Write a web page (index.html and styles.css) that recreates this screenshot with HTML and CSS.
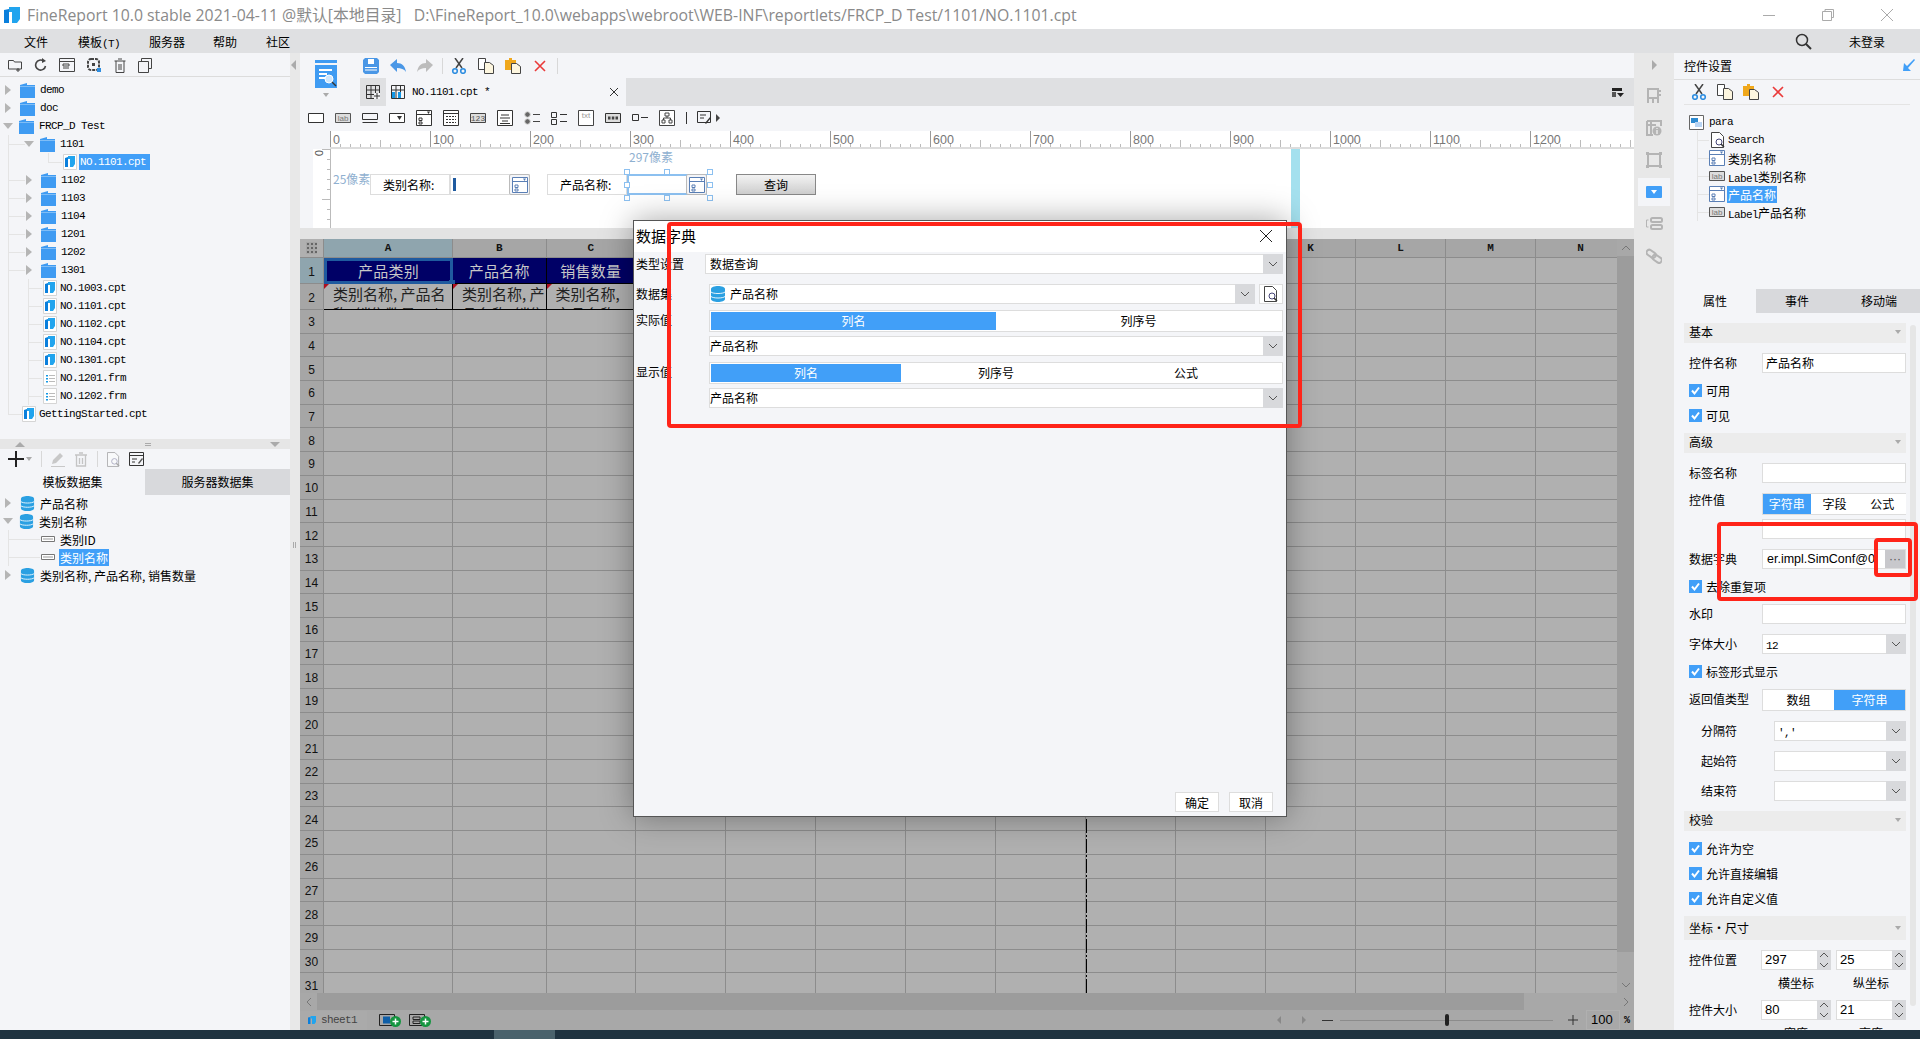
FILE: index.html
```html
<!DOCTYPE html>
<html lang="zh-CN">
<head>
    <meta charset="UTF-8">
    <title>FineReport 10.0</title>
    <link rel="stylesheet" href="styles.css">
</head>
<body>
<svg class="defs" width="0" height="0">
    <symbol id="i-logo" viewBox="0 0 16 16"><path fill="#0a7fdc" d="M0 3l5-1v14H0z"/><path fill="#21a4ee" d="M5 2V0h11v12l-3 4H8V5H5z"/></symbol>
    <symbol id="i-file" viewBox="0 0 14 16"><path fill="#fff" stroke="#d5d5d5" d="M.5.500h13v15H.5z"/><path fill="#0a7fdc" d="M2 4l3-1v10H2z"/><path fill="#21a4ee" d="M5 3V2h7v8l-2 3H7V5H5z"/></symbol>
    <symbol id="i-frm" viewBox="0 0 14 16"><path fill="#fff" stroke="#d5d5d5" d="M.5.500h13v15H.5z"/><path fill="#1398e6" d="M3 5h2v1.500H3zM3 8h2v1.500H3zM3 11h2v1.500H3z"/><path fill="#bbb" d="M6 5h6v1H6zM6 8h6v1H6zM6 11h6v1H6z"/></symbol>
    <symbol id="i-folder" viewBox="0 0 15 15"><path fill="#3f9bf2" d="M0 2l7-2v2h8v13H0z"/><path fill="#7fbdf6" d="M0 3h15v1H0z"/></symbol>
    <symbol id="i-db" viewBox="0 0 14 16"><path fill="#2ba0e2" d="M0 3c0-4 14-4 14 0v10c0 4-14 4-14 0z"/><path fill="none" stroke="#e8f4fc" d="M0 6c2 2 12 2 14 0M0 10.500c2 2 12 2 14 0"/></symbol>
    <symbol id="i-field" viewBox="0 0 14 6"><path fill="#fff" stroke="#777" d="M.5.500h13v5H.5z"/><path fill="#999" d="M2 2.500h10v1H2z"/></symbol>
    <symbol id="i-save" viewBox="0 0 16 16"><path fill="#4a97e6" d="M2 0h12l2 2v12l-2 2H2l-2-2V2z"/><path fill="#fff" d="M5 1h6v5H5zM2 9h12v1H2zM2 11.500h12v1H2z"/></symbol>
    <symbol id="i-undo" viewBox="0 0 16 16"><path fill="currentColor" d="M7 1v4c5 0 8 3 9 9-2-3-5-4-9-4v4L0 7z"/></symbol>
    <symbol id="i-redo" viewBox="0 0 16 16"><path fill="currentColor" d="M9 1v4C4 5 1 8 0 14c2-3 5-4 9-4v4l7-7z"/></symbol>
    <symbol id="i-cut" viewBox="0 0 16 16"><path fill="none" stroke="#444" stroke-width="1.500" d="M4 0l7 10M12 0L5 10"/><circle cx="4" cy="13" r="2.300" fill="none" stroke="#2d8de0" stroke-width="1.600"/><circle cx="12" cy="13" r="2.300" fill="none" stroke="#2d8de0" stroke-width="1.600"/></symbol>
    <symbol id="i-copy" viewBox="0 0 16 16"><path fill="#fff" stroke="#444" d="M.5.500h7v11h-7z"/><path fill="#fdf6df" stroke="#444" d="M6.500 4.500h5l4 3v8h-9z"/></symbol>
    <symbol id="i-paste" viewBox="0 0 16 16"><path fill="#f0a81c" d="M0 2h4V0h3v2h4v10H0z"/><path fill="#fdf6df" stroke="#444" d="M6.500 5.500h5l4 3v7h-9z"/></symbol>
    <symbol id="i-del" viewBox="0 0 12 12"><path fill="none" stroke="#ea3a3a" stroke-width="1.600" d="M1 1l10 10M11 1L1 11"/></symbol>
    <symbol id="i-combo" viewBox="0 0 16 16"><path fill="#fff" stroke="#5a7fb5" d="M.5.500h15v15H.5z"/><path fill="none" stroke="#5a7fb5" d="M.5 4.500h15M3 8h3v2.500H3zM3 12h3v2H3z"/><path fill="#5a7fb5" d="M11 1.500h3L12.500 4z"/></symbol>
    <symbol id="i-lab" viewBox="0 0 16 10"><path fill="#ddd" stroke="#555" d="M.5.500h15v9H.5z"/><text x="8" y="8" font-family="Liberation Sans" font-size="8" fill="#777" text-anchor="middle">lab</text></symbol>
    <symbol id="i-preview" viewBox="0 0 14 16"><path fill="#fff" stroke="#444" d="M.5.500h8l4 4v11H.5z"/><circle cx="8" cy="10" r="3" fill="#fff" stroke="#447"/><path stroke="#333" stroke-width="1.500" d="M10 12l3 3"/></symbol>
    <symbol id="i-chk" viewBox="0 0 13 13"><path fill="#419ff8" d="M0 0h13v13H0z"/><path fill="none" stroke="#fff" stroke-width="2" d="M3 6.500l2.500 3L10 3.500"/></symbol>
    <symbol id="i-plus" viewBox="0 0 11 11"><circle cx="5.500" cy="5.500" r="5.500" fill="#14953f"/><path stroke="#fff" stroke-width="1.500" d="M2.500 5.500h6M5.500 2.500v6"/></symbol>
</svg>

<div class="app">
    <div class="titlebar">
        <svg class="logo"><use href="#i-logo"/></svg>
        <span class="title-text">FineReport 10.0 stable 2021-04-11 @默认[本地目录]&nbsp;&nbsp;&nbsp;D:\FineReport_10.0\webapps\webroot\WEB-INF\reportlets/FRCP_D Test/1101/NO.1101.cpt</span>
        <div class="winctl">
            <svg width="14" height="14"><path stroke="#aaa" d="M1 7.500h12"/></svg>
            <svg width="14" height="14"><path fill="none" stroke="#aaa" d="M1.500 3.500h9v9h-9zM4 3V1.500h8.500v8H11"/></svg>
            <svg width="14" height="14"><path stroke="#aaa" d="M1 1l12 12M13 1L1 13"/></svg>
        </div>
    </div>

    <div class="menubar">
        <span class="menu-item m1">文件</span>
        <span class="menu-item m2">模板<span class="m">(T)</span></span>
        <span class="menu-item m3">服务器</span>
        <span class="menu-item m4">帮助</span>
        <span class="menu-item m5">社区</span>
        <svg class="search" width="17" height="17"><circle cx="7" cy="7" r="5.500" fill="none" stroke="#333" stroke-width="1.500"/><path stroke="#333" stroke-width="2" d="M11 11l5 5"/></svg>
        <span class="login">未登录</span>
    </div>

    <div class="main">
        <div class="left">
            <div class="left-tools">
                <svg width="14" height="14"><path fill="none" stroke="#444" d="M.5 2.500h5l1 1.500h7v7h-13zM10 10v4M8 12h4"/></svg>
                <svg width="13" height="14"><path fill="none" stroke="#444" stroke-width="1.600" d="M11.500 8a5 5 0 1 1-2-5"/><path fill="#444" d="M8 0l4 3-4 2z"/></svg>
                <svg width="16" height="14"><path fill="none" stroke="#444" d="M.5.500h15v13H.5zM.5 3.500h15M4 6h6v2H4zM4 10h6"/></svg>
                <svg width="15" height="15"><rect x="1" y="1" width="11" height="11" rx="3" fill="none" stroke="#444" stroke-width="2" stroke-dasharray="3 1"/><path fill="#444" d="M5 5h3v3H5z"/><path fill="#2d8de0" d="M10 10h4v4h-4z"/></svg>
                <svg width="12" height="15"><path fill="none" stroke="#444" d="M.5 3h11M2 3v11.500h8V3M4 1h4M5 6v6M7 6v6"/></svg>
                <svg width="14" height="15"><path fill="none" stroke="#444" d="M3.500 3V.5h10v10H11M.5 3.500h10v11H.5z"/></svg>
            </div>
            <div class="tree file-tree">
                <div class="row lv0"><i class="tw"></i><svg class="ic"><use href="#i-folder"/></svg><span class="m">demo</span></div>
                <div class="row lv0"><i class="tw"></i><svg class="ic"><use href="#i-folder"/></svg><span class="m">doc</span></div>
                <div class="row lv0"><i class="tw open"></i><svg class="ic"><use href="#i-folder"/></svg><span class="m">FRCP_D Test</span></div>
                <div class="row lv1"><i class="tw open"></i><svg class="ic"><use href="#i-folder"/></svg><span class="m">1101</span></div>
                <div class="row lv2"><svg class="ic ic-file"><use href="#i-file"/></svg><span class="m sel">NO.1101.cpt</span></div>
                <div class="row lv1"><i class="tw"></i><svg class="ic"><use href="#i-folder"/></svg><span class="m">1102</span></div>
                <div class="row lv1"><i class="tw"></i><svg class="ic"><use href="#i-folder"/></svg><span class="m">1103</span></div>
                <div class="row lv1"><i class="tw"></i><svg class="ic"><use href="#i-folder"/></svg><span class="m">1104</span></div>
                <div class="row lv1"><i class="tw"></i><svg class="ic"><use href="#i-folder"/></svg><span class="m">1201</span></div>
                <div class="row lv1"><i class="tw"></i><svg class="ic"><use href="#i-folder"/></svg><span class="m">1202</span></div>
                <div class="row lv1"><i class="tw"></i><svg class="ic"><use href="#i-folder"/></svg><span class="m">1301</span></div>
                <div class="row flv1"><svg class="ic ic-file"><use href="#i-file"/></svg><span class="m">NO.1003.cpt</span></div>
                <div class="row flv1"><svg class="ic ic-file"><use href="#i-file"/></svg><span class="m">NO.1101.cpt</span></div>
                <div class="row flv1"><svg class="ic ic-file"><use href="#i-file"/></svg><span class="m">NO.1102.cpt</span></div>
                <div class="row flv1"><svg class="ic ic-file"><use href="#i-file"/></svg><span class="m">NO.1104.cpt</span></div>
                <div class="row flv1"><svg class="ic ic-file"><use href="#i-file"/></svg><span class="m">NO.1301.cpt</span></div>
                <div class="row flv1"><svg class="ic ic-file"><use href="#i-frm"/></svg><span class="m">NO.1201.frm</span></div>
                <div class="row flv1"><svg class="ic ic-file"><use href="#i-frm"/></svg><span class="m">NO.1202.frm</span></div>
                <div class="row flv0"><svg class="ic ic-file"><use href="#i-file"/></svg><span class="m">GettingStarted.cpt</span></div>
            </div>
            <div class="splitter">
                <i class="tri-up"></i><span class="grip"></span><i class="tri-down"></i>
            </div>
            <div class="data-tools">
                <svg width="16" height="16"><path stroke="#222" stroke-width="2" d="M0 8h16M8 0v16"/></svg>
                <i class="caret"></i>
                <span class="vsep"></span>
                <svg width="14" height="15"><path fill="#c8c8c8" d="M9 1l3 3-7 7-4 1 1-4zM0 14h14v1H0z"/></svg>
                <svg width="14" height="15"><path fill="none" stroke="#c4c4c4" stroke-width="1.300" d="M1 3h12M2.500 3v11h9V3M5 1h4M5.500 6v6M8.500 6v6"/></svg>
                <span class="vsep"></span>
                <svg width="13" height="15" class="dim"><use href="#i-preview"/></svg>
                <svg width="15" height="14"><path fill="none" stroke="#333" d="M.5.500h14v13H.5zM.5 3.500h14M3 7h5M3 10h3"/><path fill="#555" d="M9 11l4-5 1 1-4 5z"/></svg>
            </div>
            <div class="data-tabs">
                <span>模板数据集</span><span class="off">服务器数据集</span>
            </div>
            <div class="tree data-tree">
                <div class="row lv0"><i class="tw"></i><svg class="ic"><use href="#i-db"/></svg>产品名称</div>
                <div class="row lv0"><i class="tw open"></i><svg class="ic"><use href="#i-db"/></svg>类别名称</div>
                <div class="row fld"><svg class="ic-fld"><use href="#i-field"/></svg>类别ID</div>
                <div class="row fld"><svg class="ic-fld"><use href="#i-field"/></svg><span class="sel">类别名称</span></div>
                <div class="row lv0"><i class="tw"></i><svg class="ic"><use href="#i-db"/></svg>类别名称, 产品名称, 销售数量</div>
            </div>
        </div>

        <div class="gutter">
            <i class="tri-left"></i>
            <span class="bars"></span>
        </div>

        <div class="center">
            <div class="head">
                <div class="big-icon">
                    <svg width="22" height="28"><path fill="#3f9bf2" d="M0 0h22v3H0zM0 5h22v23H0z"/><path fill="#fff" d="M4 9h13v2H4zM4 13h8v2H4zM4 17h6v2H4z"/><circle cx="14" cy="19" r="4" fill="#cfe6fb" stroke="#fff"/><path stroke="#333" stroke-width="1.500" d="M17 22l4 4"/></svg>
                    <i class="caret"></i>
                </div>
                <div class="head-right">
                    <div class="tools">
                        <svg width="16" height="16"><use href="#i-save"/></svg>
                        <svg width="16" height="16" class="blue"><use href="#i-undo"/></svg>
                        <svg width="16" height="16" class="grey"><use href="#i-redo"/></svg>
                        <span class="vsep"></span>
                        <svg width="16" height="16"><use href="#i-cut"/></svg>
                        <svg width="16" height="16"><use href="#i-copy"/></svg>
                        <svg width="16" height="16"><use href="#i-paste"/></svg>
                        <svg class="tool-del" width="12" height="12"><use href="#i-del"/></svg>
                        <span class="vsep"></span>
                    </div>
                    <div class="tabs">
                        <div class="tab-add"><svg width="14" height="14"><path fill="none" stroke="#333" d="M.5.500h13v13H.5zM.5 5h13M.5 9.500h13M5 .5v13M9.500.5v9"/><path fill="#f4f5f8" d="M8 8h6v6H8z"/><path stroke="#333" d="M8 11h6M11 8v6"/></svg></div>
                        <div class="tab">
                            <svg width="14" height="14"><path fill="none" stroke="#333" d="M.5.500h13v13H.5zM.5 5h13M5 .5v13M9.500.5v13"/><path fill="#1398e6" d="M1 7h3v6H1zM7 7h3v6H7z"/></svg>
                            <span class="m">NO.1101.cpt *</span>
                            <svg class="tab-x" width="10" height="10"><path stroke="#333" d="M1 1l8 8M9 1L1 9"/></svg>
                        </div>
                        <svg class="tab-menu" width="12" height="10"><path fill="#222" d="M0 0h10v3H0z"/><path fill="#222" d="M5 5h7l-3.500 4z"/><path fill="#555" d="M0 4h4v5H0z"/></svg>
                    </div>
                </div>
            </div>

            <div class="widgets">
                <svg width="16" height="10"><path fill="#fff" stroke="#333" d="M.5.500h15v9H.5z"/></svg>
                <svg width="16" height="10"><use href="#i-lab"/></svg>
                <svg width="16" height="10"><path fill="none" stroke="#333" d="M.5.500h15v6H.5zM.5 9.500h15"/></svg>
                <svg width="16" height="10"><path fill="#fff" stroke="#333" d="M.5.500h15v9H.5z"/><path fill="#333" d="M8 3h5l-2.500 4z"/></svg>
                <svg width="16" height="16"><path fill="#fff" stroke="#333" d="M.5.500h15v15H.5z"/><path fill="none" stroke="#333" d="M.5 4.500h15M3 8h3v2.500H3zM3 12h3v2H3z"/><path fill="#333" d="M11 1.500h3L12.500 4z"/></svg>
                <svg width="16" height="16"><path fill="#fff" stroke="#333" d="M.5.500h15v15H.5zM.5 3.500h15"/><path stroke="#333" stroke-dasharray="2 1" d="M3 6.500h10M3 9.500h10M3 12.500h10"/></svg>
                <svg width="16" height="10"><path fill="#ddd" stroke="#444" d="M.5.500h15v9H.5z"/><text x="8" y="8" font-family="Liberation Mono" font-size="8" fill="#555" text-anchor="middle">123</text></svg>
                <svg width="16" height="16"><path fill="#fff" stroke="#333" d="M.5.500h15v15H.5zM4 5h8M3 8h10M5 11h6M3 13.500h10"/></svg>
                <svg width="16" height="14"><circle cx="3.500" cy="3.500" r="2.800" fill="#666" stroke="#ddd"/><circle cx="3.500" cy="10.500" r="2.800" fill="#666" stroke="#ddd"/><path stroke="#444" d="M9 3.500h7M9 10.500h7"/></svg>
                <svg width="16" height="14"><path fill="none" stroke="#333" d="M.5 1.500h5v5h-5zM.5 8.500h5v5h-5zM9 3.500h7M9 10.500h7"/></svg>
                <svg width="16" height="16"><path fill="#fff" stroke="#444" d="M.5.500h15v15H.5z"/><text x="8" y="8" font-family="Liberation Sans" font-size="8" fill="#999" text-anchor="middle">txt</text></svg>
                <svg width="16" height="10"><path fill="#ddd" stroke="#333" d="M.5.500h15v9H.5z"/><path fill="#444" d="M3 3.500h2.500v3H3zM6.800 3.500h2.500v3H6.800zM10.500 3.500H13v3h-2.500z"/></svg>
                <svg width="16" height="8"><path fill="none" stroke="#333" d="M.5.500h6v6h-6zM9 3.500h7"/></svg>
                <svg width="16" height="16"><path fill="#fff" stroke="#444" d="M.5.500h15v15H.5zM6 3h4v3H6zM3 10h3v3H3zM10 10h3v3h-3zM8 6v2M4.500 10V8h7v2"/></svg>
                <span class="vsep tall"></span>
                <svg width="14" height="14"><path fill="none" stroke="#333" d="M.5.500h13v11H.5zM3 4h6M3 7h4"/><path fill="#333" d="M8 12l5-6 1 1-5 6z"/></svg>
                <i class="tri-right"></i>
            </div>

            <div class="ruler-row">
                <div class="ruler-gap"></div>
                <div class="ruler">
                    <span>0</span><span>100</span><span>200</span><span>300</span><span>400</span><span>500</span><span>600</span><span>700</span><span>800</span><span>900</span><span>1000</span><span>1100</span><span>1200</span>
                </div>
            </div>

            <div class="form-row">
                <div class="ruler-v"><span>0</span></div>
                <div class="canvas">
                    <span class="px-tip tip-left">25像素</span>
                    <span class="px-tip tip-top">297像素</span>
                    <div class="f-label lab1">类别名称:</div>
                    <div class="f-combo combo1"><i class="cursor"></i><span class="f-btn"><svg width="16" height="16"><use href="#i-combo"/></svg></span></div>
                    <div class="f-label lab2">产品名称:</div>
                    <div class="f-combo combo2 picked"><span class="f-btn"><svg width="16" height="16"><use href="#i-combo"/></svg></span></div>
                    <i class="hd h1"></i><i class="hd h2"></i><i class="hd h3"></i><i class="hd h4"></i><i class="hd h5"></i><i class="hd h6"></i><i class="hd h7"></i><i class="hd h8"></i>
                    <div class="f-query">查询</div>
                    <div class="canvas-edge"></div>
                </div>
            </div>
            <div class="strip"></div>

            <div class="sheet-area">
                <div class="sheet-clip">
                    <div class="sheet" id="sheetGrid"></div>
                    <div class="page-break"></div>
                </div>
                <div class="vbar">
                    <span class="sb-btn"><svg width="10" height="6"><path fill="none" stroke="#777" d="M1 5l4-4 4 4"/></svg></span>
                    <span class="sb-thumb"></span>
                    <span class="sb-btn sb-end"><svg width="10" height="6"><path fill="none" stroke="#777" d="M1 1l4 4 4-4"/></svg></span>
                </div>
            </div>

            <div class="hbar">
                <span class="hb-btn"><svg width="6" height="10"><path fill="none" stroke="#777" d="M5 1L1 5l4 4"/></svg></span>
                <span class="hb-thumb"></span>
                <span class="hb-btn end"><svg width="6" height="10"><path fill="none" stroke="#777" d="M1 1l4 4-4 4"/></svg></span>
            </div>

            <div class="sheetbar">
                <div class="sheet-tab"><svg width="8" height="8"><use href="#i-logo"/></svg><span class="m">sheet1</span></div>
                <svg class="add-a" width="22" height="14"><path fill="none" stroke="#222" d="M.5 1.500h15v11H.5z"/><path fill="#0f5fa8" d="M4 3.500h7v7H4z"/><use href="#i-plus" x="11" y="3" width="11" height="11"/></svg>
                <svg class="add-b" width="22" height="14"><path fill="none" stroke="#222" d="M.5 1.500h15v11H.5zM4 4h7v2.500H4zM4 8h7v2.500H4z"/><use href="#i-plus" x="11" y="3" width="11" height="11"/></svg>
                <div class="zoombox">
                    <i class="arr-l"></i><i class="arr-r"></i>
                    <span class="z-minus"></span>
                    <span class="z-track"><i></i></span>
                    <svg width="10" height="10"><path stroke="#333" d="M0 5h10M5 0v10"/></svg>
                    <span class="z-val">100</span>
                    <span class="z-pct">%</span>
                </div>
            </div>
        </div>

        <div class="iconbar">
            <i class="tri-right side"></i>
            <svg class="rail" width="16" height="16"><path fill="none" stroke="#b4b4b4" stroke-width="2" d="M2 1h10v9H2zM2 10v5M7 10v5M12 10v5M12 3h3M12 7h3"/></svg>
            <svg class="rail" width="16" height="16"><path fill="none" stroke="#b4b4b4" stroke-width="2" d="M1 1h14v5M1 1v14h6M1 5h9M5 1v14"/><circle cx="11" cy="11" r="4.500" fill="#b4b4b4"/><path stroke="#e8e8e8" stroke-width="1.500" d="M11 10v4M11 8v1"/></svg>
            <svg class="rail" width="16" height="16"><path fill="none" stroke="#b4b4b4" stroke-width="2" d="M2 2h12v12H2z"/><path fill="#b4b4b4" d="M0 0h3v3H0zM13 0h3v3h-3zM0 13h3v3H0zM13 13h3v3h-3z"/></svg>
            <div class="rail-on"><svg width="16" height="12"><rect width="16" height="12" rx="1" fill="#419ff8"/><path fill="#fff" d="M5 4h6L8 8z"/></svg></div>
            <svg class="rail" width="17" height="13"><path fill="none" stroke="#b4b4b4" d="M2.500 3H.5v7h2"/><rect x="5" y="1" width="11" height="4" rx="1.500" fill="none" stroke="#b4b4b4" stroke-width="2"/><rect x="5" y="8" width="11" height="4" rx="1.500" fill="none" stroke="#b4b4b4" stroke-width="2"/></svg>
            <svg class="rail rail-end" width="16" height="16"><rect x="0" y="3" width="10" height="5.500" rx="2.700" fill="none" stroke="#b4b4b4" stroke-width="2" transform="rotate(35 5 6)"/><rect x="6" y="8" width="10" height="5.500" rx="2.700" fill="none" stroke="#b4b4b4" stroke-width="2" transform="rotate(35 11 11)"/></svg>
        </div>

        <div class="right">
            <div class="right-head">控件设置<svg width="12" height="12"><path fill="#419ff8" d="M12 1l-1-1-7 7-3-3-1 8h8L5 9z"/></svg></div>
            <div class="right-tools">
                <svg width="16" height="16"><use href="#i-cut"/></svg>
                <svg width="16" height="16"><use href="#i-copy"/></svg>
                <svg width="16" height="16"><use href="#i-paste"/></svg>
                <svg width="12" height="12"><use href="#i-del"/></svg>
            </div>
            <div class="tree widget-tree">
                <div class="row w-root"><svg width="15" height="15"><path fill="#fff" stroke="#666" d="M.5.500h14v14H.5z"/><path fill="#2d8ad0" d="M2 3h7v5H2z"/><path fill="#b9d5f4" d="M6 7h7v5H6z"/></svg><span class="m">para</span></div>
                <div class="row w-kid"><svg class="kid-search" width="14" height="16"><use href="#i-preview"/></svg><span class="m">Search</span></div>
                <div class="row w-kid"><svg width="16" height="16"><use href="#i-combo"/></svg><span>类别名称</span></div>
                <div class="row w-kid"><svg width="16" height="10"><use href="#i-lab"/></svg><span><span class="m">Label</span>类别名称</span></div>
                <div class="row w-kid"><svg width="16" height="16"><use href="#i-combo"/></svg><span class="sel">产品名称</span></div>
                <div class="row w-kid"><svg width="16" height="10"><use href="#i-lab"/></svg><span><span class="m">Label</span>产品名称</span></div>
            </div>
            <div class="prop-tabs">
                <span class="on">属性</span><span>事件</span><span>移动端</span>
            </div>
            <div class="prop-scroll"></div>
            <div class="props">
                <div class="sect">基本<i class="caret"></i></div>
                <div class="prow"><label>控件名称</label><div class="inp">产品名称</div></div>
                <div class="chk"><svg width="13" height="13"><use href="#i-chk"/></svg>可用</div>
                <div class="chk"><svg width="13" height="13"><use href="#i-chk"/></svg>可见</div>
                <div class="sect">高级<i class="caret"></i></div>
                <div class="prow"><label>标签名称</label><div class="inp"></div></div>
                <div class="prow seg-row"><label class="top">控件值</label><div class="seg s3"><b>字符串</b><span>字段</span><span>公式</span></div></div>
                <div class="prow tight"><label></label><div class="inp"></div></div>
                <div class="prow"><label>数据字典</label><div class="inp dict">er.impl.SimConf@0|<span class="dots">···</span></div></div>
                <div class="chk"><svg width="13" height="13"><use href="#i-chk"/></svg>去除重复项</div>
                <div class="prow"><label>水印</label><div class="inp"></div></div>
                <div class="prow"><label>字体大小</label><div class="inp sel-box"><span class="m">12</span><span class="drop"><svg width="10" height="6"><path fill="none" stroke="#555" d="M1 1l4 4 4-4"/></svg></span></div></div>
                <div class="chk"><svg width="13" height="13"><use href="#i-chk"/></svg>标签形式显示</div>
                <div class="prow seg-row"><label>返回值类型</label><div class="seg s2"><span>数组</span><b>字符串</b></div></div>
                <div class="prow sub"><label>分隔符</label><div class="inp sel-box"><span class="m">','</span><span class="drop"><svg width="10" height="6"><path fill="none" stroke="#555" d="M1 1l4 4 4-4"/></svg></span></div></div>
                <div class="prow sub"><label>起始符</label><div class="inp sel-box"><span class="drop"><svg width="10" height="6"><path fill="none" stroke="#555" d="M1 1l4 4 4-4"/></svg></span></div></div>
                <div class="prow sub"><label>结束符</label><div class="inp sel-box"><span class="drop"><svg width="10" height="6"><path fill="none" stroke="#555" d="M1 1l4 4 4-4"/></svg></span></div></div>
                <div class="sect">校验<i class="caret"></i></div>
                <div class="chk"><svg width="13" height="13"><use href="#i-chk"/></svg>允许为空</div>
                <div class="chk"><svg width="13" height="13"><use href="#i-chk"/></svg>允许直接编辑</div>
                <div class="chk"><svg width="13" height="13"><use href="#i-chk"/></svg>允许自定义值</div>
                <div class="sect tall">坐标・尺寸<i class="caret"></i></div>
                <div class="prow spin-row"><label>控件位置</label>
                    <div class="spin">297<span class="arrows"><svg width="10" height="18"><path fill="none" stroke="#555" d="M1 6l4-4 4 4M1 12l4 4 4-4"/></svg></span></div>
                    <div class="spin">25<span class="arrows"><svg width="10" height="18"><path fill="none" stroke="#555" d="M1 6l4-4 4 4M1 12l4 4 4-4"/></svg></span></div>
                </div>
                <div class="caps"><span>横坐标</span><span>纵坐标</span></div>
                <div class="prow spin-row"><label>控件大小</label>
                    <div class="spin">80<span class="arrows"><svg width="10" height="18"><path fill="none" stroke="#555" d="M1 6l4-4 4 4M1 12l4 4 4-4"/></svg></span></div>
                    <div class="spin">21<span class="arrows"><svg width="10" height="18"><path fill="none" stroke="#555" d="M1 6l4-4 4 4M1 12l4 4 4-4"/></svg></span></div>
                </div>
                <div class="caps"><span>宽度</span><span>高度</span></div>
            </div>
        </div>
    </div>

    <div class="taskbar"><span class="task-on"></span></div>

    <div class="dialog">
        <div class="dlg-title">数据字典<svg width="14" height="14"><path stroke="#222" d="M1 1l12 12M13 1L1 13"/></svg></div>
        <div class="dlg-body">
            <div class="drow first"><label>类型设置</label><div class="dsel">数据查询<span class="drop"><svg width="10" height="6"><path fill="none" stroke="#555" d="M1 1l4 4 4-4"/></svg></span></div></div>
            <div class="drow r2"><label>数据集</label>
                <div class="dsel with-db"><svg class="db" width="14" height="16"><use href="#i-db"/></svg>产品名称<span class="drop"><svg width="10" height="6"><path fill="none" stroke="#555" d="M1 1l4 4 4-4"/></svg></span></div>
                <div class="dpreview"><svg width="14" height="16"><use href="#i-preview"/></svg></div>
            </div>
            <div class="drow r3"><label>实际值</label><div class="dseg"><b>列名</b><span>列序号</span></div></div>
            <div class="drow r4"><label></label><div class="dsel bare">产品名称<span class="drop"><svg width="10" height="6"><path fill="none" stroke="#555" d="M1 1l4 4 4-4"/></svg></span></div></div>
            <div class="drow r3"><label>显示值</label><div class="dseg three"><b>列名</b><span>列序号</span><span>公式</span></div></div>
            <div class="drow r4"><label></label><div class="dsel bare">产品名称<span class="drop"><svg width="10" height="6"><path fill="none" stroke="#555" d="M1 1l4 4 4-4"/></svg></span></div></div>
        </div>
        <div class="dlg-foot"><button>确定</button><button>取消</button></div>
    </div>

    <div class="mark mark-dialog"></div>
    <div class="mark mark-dict"></div>
    <div class="mark mark-dots"></div>
</div>
<script src="grid.js"></script>
</body>
</html>
```

FILE: styles.css
```css
* {
    box-sizing: border-box;
}
body {
    margin: 0;
    background-color: #f4f5f8;
    color: #000;
    font-family: "Noto Sans CJK SC", "Liberation Sans", sans-serif;
    font-size: 12px;
}
i {
    display: block;
    font-style: normal;
}
svg {
    display: block;
    flex: none;
}
.defs {
    display: none;
}
.m {
    font-family: "Liberation Mono", "Noto Sans CJK SC", monospace;
    font-size: 11px;
    letter-spacing: -0.6px;
}
.sel {
    background-color: #419ff8;
    color: #fff;
}
.app {
    position: relative;
    display: flex;
    flex-direction: column;
    width: 1920px;
    height: 1039px;
    overflow: hidden;
}

/* title + menu */
.titlebar {
    display: flex;
    align-items: center;
    height: 29px;
    padding-left: 4px;
    background-color: #fff;
}
.logo {
    width: 16px;
    height: 16px;
}
.title-text {
    margin-left: 7px;
    color: #8a8a8a;
    font-family: "Open Sans", "Noto Sans CJK SC", sans-serif;
    font-size: 15.8px;
}
.winctl {
    display: flex;
    gap: 45px;
    margin-left: auto;
    padding-right: 26px;
}
.menubar {
    display: flex;
    align-items: center;
    height: 24px;
    background-color: #dfe0e2;
}
.menu-item {
    flex: none;
}
.m1 { margin-left: 24px; }
.m2 { margin-left: 30px; }
.m3 { margin-left: 29px; }
.m4 { margin-left: 28px; }
.m5 { margin-left: 29px; }
.search {
    margin-left: auto;
}
.login {
    margin: 0 35px 0 37px;
}
.main {
    display: flex;
    height: 977px;
}
.taskbar {
    height: 9px;
    padding-left: 494px;
    background-color: #1f3340;
}
.task-on {
    display: block;
    width: 61px;
    height: 9px;
    background-color: #4a626c;
}

/* left pane */
.left {
    width: 290px;
    background-color: #f4f5f8;
}
.left-tools {
    display: flex;
    align-items: center;
    gap: 12px;
    height: 24px;
    padding: 1px 0 0 8px;
    border-bottom: 1px solid #dcdcdc;
}
.file-tree {
    height: 362px;
    padding-top: 4px;
}
.data-tree {
    margin-top: -1px;
}
.row {
    --guide: linear-gradient(#e4e4e4, #e4e4e4);
    display: flex;
    align-items: center;
    height: 18px;
    white-space: nowrap;
}
.tw {
    width: 0;
    height: 0;
    margin-right: 9px;
    border-top: 5px solid transparent;
    border-bottom: 5px solid transparent;
    border-left: 6px solid #b5b5b5;
}
.tw.open {
    margin-right: 6px;
    margin-left: -2px;
    border-top: 6px solid #b5b5b5;
    border-right: 5px solid transparent;
    border-bottom: 0;
    border-left: 5px solid transparent;
}
.ic {
    width: 15px;
    height: 15px;
    margin-right: 5px;
}
.ic-file {
    width: 14px;
    height: 16px;
    margin-right: 3px;
}
.lv0 { padding-left: 5px; }
.lv1 {
    padding-left: 26px;
    background: var(--guide) 8px 0 / 1px 100% no-repeat, var(--guide) 8px 9px / 17px 1px no-repeat;
}
.lv2 {
    padding-left: 63px;
    background: var(--guide) 8px 0 / 1px 100% no-repeat, var(--guide) 48px 0 / 1px 10px no-repeat, var(--guide) 48px 9px / 14px 1px no-repeat;
}
.lv2 .ic-file { margin-right: 2px; }
.lv2 .sel {
    padding: 2px 4px 2px 1px;
}
.flv1 {
    padding-left: 43px;
    background: var(--guide) 8px 0 / 1px 100% no-repeat, var(--guide) 28px 0 / 1px 100% no-repeat, var(--guide) 28px 9px / 14px 1px no-repeat;
}
.flv0 {
    padding-left: 22px;
    background: var(--guide) 8px 0 / 1px 10px no-repeat, var(--guide) 8px 9px / 14px 1px no-repeat;
}
.fld {
    padding-left: 41px;
    background: var(--guide) 8px 0 / 1px 100% no-repeat, var(--guide) 8px 9px / 32px 1px no-repeat;
}
.ic-fld {
    width: 14px;
    height: 6px;
    margin-right: 5px;
}
.fld .sel {
    margin-left: -1px;
    padding: 0 1px;
}
.splitter {
    display: flex;
    align-items: center;
    justify-content: space-between;
    height: 10px;
    padding: 0 10px 0 15px;
    background-color: #e6e6e6;
}
.grip {
    width: 6px;
    height: 3px;
    border-top: 1px solid #aaa;
    border-bottom: 1px solid #aaa;
}
.tri-up {
    border-right: 5px solid transparent;
    border-bottom: 5px solid #aaa;
    border-left: 5px solid transparent;
}
.tri-down {
    border-top: 5px solid #aaa;
    border-right: 5px solid transparent;
    border-left: 5px solid transparent;
}
.data-tools {
    display: flex;
    align-items: center;
    gap: 9px;
    height: 20px;
    padding-left: 8px;
}
.data-tools .caret {
    margin-left: -7px;
}
.dim {
    opacity: 0.4;
}
.caret {
    border-top: 4px solid #aaa;
    border-right: 3.500px solid transparent;
    border-left: 3.500px solid transparent;
}
.vsep {
    width: 1px;
    height: 16px;
    background-color: #d8d8d8;
}
.data-tabs {
    display: flex;
    height: 26px;
}
.data-tabs span {
    flex: 1;
    font-size: 12px;
    line-height: 26px;
    text-align: center;
}
.data-tabs .off {
    background-color: #d8d9dc;
}
.gutter {
    position: relative;
    width: 10px;
    background-color: #e8e8e8;
}
.tri-left {
    position: absolute;
    top: 7px;
    left: 1px;
    border-top: 5px solid transparent;
    border-right: 5px solid #aaa;
    border-bottom: 5px solid transparent;
}
.bars {
    position: absolute;
    top: 489px;
    left: 3px;
    width: 3px;
    height: 6px;
    border-right: 1px solid #aaa;
    border-left: 1px solid #aaa;
}

/* center */
.center {
    display: flex;
    flex-direction: column;
    width: 1334px;
    background-color: #f4f5f8;
}
.head {
    display: flex;
    height: 53px;
}
.big-icon {
    display: flex;
    flex-direction: column;
    align-items: center;
    width: 60px;
    padding: 7px 8px 0 0;
}
.big-icon .caret {
    margin-top: 5px;
}
.head-right {
    flex: 1;
}
.tools {
    display: flex;
    align-items: center;
    gap: 11px;
    height: 25px;
    padding-left: 3px;
}
.tools .vsep {
    margin-right: -3px;
    margin-left: -2px;
}
.tool-del {
    margin-left: 2px;
}
.tools .tool-del + .vsep {
    margin-left: 0;
}
.blue { color: #4a97e6; }
.grey { color: #bcbcbc; }
.tabs {
    position: relative;
    display: flex;
    height: 28px;
    background-color: #dfe0e2;
}
.tab-add {
    display: flex;
    align-items: center;
    justify-content: center;
    width: 26px;
}
.tab {
    display: flex;
    align-items: center;
    gap: 7px;
    width: 240px;
    padding-left: 5px;
    background-color: #f4f5f8;
}
.tab-x {
    margin-left: auto;
    margin-right: 7px;
}
.tab-menu {
    margin: 10px 10px 0 auto;
}
.widgets {
    display: flex;
    align-items: center;
    gap: 11px;
    height: 25px;
    padding: 0 0 2px 8px;
}
.widgets .tall {
    height: 12px;
    margin: 0 -1px 0 0;
    background-color: #333;
}
.tri-right {
    margin-left: -6px;
    border-top: 4px solid transparent;
    border-bottom: 4px solid transparent;
    border-left: 4px solid #444;
}
.ruler-row {
    display: flex;
    height: 18px;
}
.ruler-gap {
    width: 30px;
}
.ruler {
    display: flex;
    flex: 1;
    overflow: hidden;
    border-bottom: 2px solid #ddd;
    background: repeating-linear-gradient(90deg, #bbb 0 1px, transparent 1px 10px) 0 100% / 100% 3px no-repeat, repeating-linear-gradient(90deg, #bbb 0 1px, transparent 1px 50px) 0 100% / 100% 7px no-repeat, #fff;
}
.ruler span {
    flex: none;
    width: 100px;
    padding-left: 2px;
    border-left: 1px solid #999;
    color: #777;
    font-family: "Liberation Sans", sans-serif;
    font-size: 12.5px;
    line-height: 18px;
}
.form-row {
    display: flex;
    height: 79px;
    padding-left: 13px;
    background-color: #f4f5f8;
}
.ruler-v {
    position: relative;
    width: 17px;
    background: repeating-linear-gradient(180deg, #bbb 0 1px, transparent 1px 10px) 100% 0 / 3px 100% no-repeat, repeating-linear-gradient(180deg, #bbb 0 1px, transparent 1px 50px) 100% 0 / 8px 100% no-repeat, #fff;
}
.ruler-v span {
    position: absolute;
    top: -2px;
    left: 3px;
    color: #555;
    font-family: "Liberation Sans", sans-serif;
    font-size: 11px;
    transform: rotate(90deg);
}
.canvas {
    position: relative;
    flex: 1;
    border-left: 1px solid #bbb;
    background-color: #fff;
}
.canvas-edge {
    position: absolute;
    top: 0;
    bottom: 0;
    left: 960px;
    width: 9px;
    background-color: #a4e0ee;
}
.px-tip {
    position: absolute;
    color: #8fb0d0;
    font-size: 12px;
}
.tip-left {
    top: 21px;
    left: 2px;
}
.tip-top {
    top: -1px;
    left: 298px;
}
.f-label {
    position: absolute;
    top: 25px;
    width: 80px;
    height: 21px;
    padding-left: 12px;
    border: 1px solid #ddd;
    line-height: 19px;
}
.lab1 { left: 39px; }
.lab2 { left: 216px; }
.f-combo {
    position: absolute;
    top: 25px;
    width: 80px;
    height: 21px;
    border: 1px solid #ddd;
}
.combo1 { left: 119px; }
.combo2 { left: 296px; }
.picked {
    border: 2px solid #8cc0f0;
}
.cursor {
    position: absolute;
    top: 3px;
    left: 2px;
    width: 3px;
    height: 13px;
    background-color: #1f5a9f;
}
.f-btn {
    position: absolute;
    top: -1px;
    right: -1px;
    display: flex;
    align-items: center;
    justify-content: center;
    width: 21px;
    height: 21px;
    border: 1px solid #bbb;
    border-radius: 2px;
    background-color: #f4f5f8;
}
.picked .f-btn {
    top: -2px;
    right: -2px;
}
.hd {
    position: absolute;
    width: 6px;
    height: 6px;
    border: 1px solid #8cc0f0;
    background-color: #fff;
}
.h1 { top: 20px; left: 293px; }
.h2 { top: 20px; left: 333px; }
.h3 { top: 20px; left: 376px; }
.h4 { top: 33px; left: 293px; }
.h5 { top: 33px; left: 376px; }
.h6 { top: 46px; left: 293px; }
.h7 { top: 46px; left: 333px; }
.h8 { top: 46px; left: 376px; }
.f-query {
    position: absolute;
    top: 25px;
    left: 405px;
    width: 80px;
    height: 21px;
    border: 1px solid #888;
    background: linear-gradient(#f2f2f2, #cfcfcf);
    line-height: 19px;
    text-align: center;
}
.strip {
    height: 11px;
    background-color: #e3e3e3;
}

/* sheet, dimmed by the dialog */
.sheet-area {
    display: flex;
    height: 754px;
}
.sheet-clip {
    position: relative;
    flex: 1;
    overflow: hidden;
    background-color: #b0b0b0;
}
.sheet {
    display: grid;
    grid-template-columns: 24px 129px 93.500px 89.500px repeat(12, 90px);
    grid-template-rows: 19px 26px 26px repeat(29, 23.7px);
    width: 1476px;
}
.cell {
    overflow: hidden;
    border-right: 1px solid #8c8c8c;
    border-bottom: 1px solid #8c8c8c;
    background-color: #b0b0b0;
}
.col-head, .row-head {
    display: flex;
    align-items: center;
    justify-content: center;
    background-color: #a6a6a6;
    color: #111;
}
.col-head {
    font-family: "Liberation Mono", monospace;
    font-size: 11px;
    font-weight: bold;
}
.row-head {
    padding-top: 2px;
    font-family: "Liberation Sans", sans-serif;
    font-size: 12px;
}
.hit {
    background-color: #8fa5ae;
}
.corner {
    padding: 3px 6px;
    background: radial-gradient(#666 0 1px, transparent 1.500px) 0 0 / 4px 4px content-box;
    background-color: #a6a6a6;
}
.navy {
    border-color: #000;
    background-color: #000066;
    color: #c8c8c8;
    font-size: 15px;
    letter-spacing: 0.2px;
    line-height: 25px;
    text-align: center;
}
.navy.picked-cell {
    position: relative;
    overflow: visible;
    border: 3px solid #1f5a9f;
    line-height: 19px;
}
.picked-cell::after {
    content: "";
    position: absolute;
    right: -5px;
    bottom: -5px;
    width: 6px;
    height: 6px;
    background-color: #1f5a9f;
}
.expr {
    position: relative;
    padding-left: 9px;
    border-color: #000;
    color: #222;
    font-size: 15px;
    line-height: 20px;
    word-break: break-all;
}
.expr::before {
    content: "";
    position: absolute;
    top: 0;
    left: 0;
    border-top: 5px solid #b01020;
    border-right: 5px solid transparent;
}
.page-break {
    position: absolute;
    top: 0;
    bottom: 0;
    left: 786px;
    width: 1px;
    background: repeating-linear-gradient(180deg, #000 0 14px, transparent 14px 16px, #000 16px 18px, transparent 18px 20px);
}
.vbar {
    display: flex;
    flex-direction: column;
    width: 17px;
    background-color: #a8a8a8;
}
.sb-btn {
    display: flex;
    align-items: center;
    justify-content: center;
    height: 17px;
}
.sb-thumb {
    height: 696px;
    background-color: #9c9c9c;
}
.sb-end {
    margin-top: auto;
}
.hbar {
    display: flex;
    height: 17px;
    background-color: #a8a8a8;
}
.hb-btn {
    display: flex;
    align-items: center;
    justify-content: center;
    width: 17px;
}
.hb-btn.end {
    margin-left: auto;
}
.hb-thumb {
    width: 1207px;
    background-color: #9c9c9c;
}
.sheetbar {
    display: flex;
    align-items: center;
    height: 20px;
    background-color: #a8a8a8;
}
.sheet-tab {
    display: flex;
    align-items: center;
    gap: 5px;
    width: 67px;
    height: 19px;
    padding-left: 8px;
    background-color: #aaa;
    color: #444;
}
.add-a { margin-left: 12px; }
.add-b { margin-left: 8px; }
.zoombox {
    display: flex;
    align-items: center;
    margin-left: auto;
}
.arr-l, .arr-r {
    border-top: 4px solid transparent;
    border-bottom: 4px solid transparent;
}
.arr-l {
    border-right: 4px solid #888;
}
.arr-r {
    margin-left: 21px;
    border-left: 4px solid #888;
}
.z-minus {
    width: 11px;
    height: 1px;
    margin-left: 16px;
    background-color: #333;
}
.z-track {
    position: relative;
    width: 213px;
    height: 1px;
    margin: 0 15px 0 7px;
    background-color: #8c8c8c;
}
.z-track i {
    position: absolute;
    top: -6px;
    left: 105px;
    width: 4px;
    height: 12px;
    border-radius: 2px;
    background-color: #222;
}
.z-val {
    width: 34px;
    height: 20px;
    margin-left: 8px;
    padding-left: 4px;
    border: 1px solid #b0b0b0;
    font-family: "Liberation Sans", sans-serif;
    font-size: 13px;
    line-height: 18px;
}
.z-pct {
    width: 14px;
    font-family: "Liberation Mono", monospace;
    font-size: 10px;
    font-weight: bold;
    text-align: center;
}

/* icon rail */
.iconbar {
    display: flex;
    flex-direction: column;
    align-items: center;
    width: 40px;
    background-color: #e8e8e8;
}
.iconbar .side {
    margin: 7px 0 0;
    border-top-width: 5px;
    border-bottom-width: 5px;
    border-left-width: 5px;
    border-left-color: #aaa;
}
.rail {
    margin-top: 16px;
}
.rail:first-of-type {
    margin-top: 18px;
}
.rail-end {
    margin-top: 18px;
}
.rail-on {
    display: flex;
    align-items: center;
    justify-content: center;
    width: 32px;
    height: 28px;
    margin: 10px 0 -5px;
    background-color: #f4f5f8;
}

/* right panel */
.right {
    position: relative;
    width: 246px;
    overflow: hidden;
    background-color: #f4f5f8;
}
.right-head {
    display: flex;
    align-items: center;
    justify-content: space-between;
    height: 27px;
    padding: 0 5px 2px 10px;
    border-bottom: 1px solid #ddd;
}
.right-tools {
    display: flex;
    align-items: center;
    gap: 10px;
    height: 25px;
    margin: 0 10px;
    padding-left: 7px;
    border-bottom: 1px solid #e4e4e4;
}
.right-tools svg:last-child {
    margin-left: 3px;
}
.widget-tree {
    height: 184px;
    padding-top: 8px;
}
.w-root {
    gap: 5px;
    padding-left: 15px;
}
.w-kid {
    gap: 3px;
    padding-left: 35px;
    background: var(--guide) 23px 0 / 1px 100% no-repeat, var(--guide) 23px 9px / 12px 1px no-repeat;
}
.kid-search {
    margin-left: 2px;
}
.widget-tree .sel {
    margin-left: -1px;
    padding: 0 1px;
}
.prop-tabs {
    display: flex;
    height: 24px;
    background-color: #d8d9dc;
}
.prop-tabs span {
    flex: 1;
    line-height: 24px;
    text-align: center;
}
.prop-tabs .on {
    background-color: #f4f5f8;
}
.prop-scroll {
    position: absolute;
    top: 272px;
    right: 4px;
    width: 6px;
    height: 681px;
    border-radius: 3px;
    background-color: #e6e6e6;
}
.props {
    display: flex;
    flex-direction: column;
    gap: 10px;
    padding: 10px 14px 0 10px;
}
.sect {
    display: flex;
    flex: none;
    align-items: center;
    justify-content: space-between;
    height: 20px;
    padding: 0 5px 3px;
    background-color: #ececec;
}
.sect.tall {
    height: 24px;
    padding-bottom: 1px;
}
.prow {
    display: flex;
    flex: none;
    height: 20px;
    padding-left: 5px;
    line-height: 20px;
}
.prow label {
    flex: none;
    width: 73px;
}
.prow label.top {
    line-height: 14px;
}
.seg-row {
    height: 22px;
}
.tight {
    margin-top: -6px;
}
.sub {
    padding-left: 17px;
}
.inp {
    position: relative;
    flex: 1;
    padding-left: 3px;
    border: 1px solid #ddd;
    background-color: #fff;
    line-height: 18px;
}
.dict {
    padding-left: 4px;
    font-family: "Liberation Sans", sans-serif;
    font-size: 12.5px;
    white-space: nowrap;
}
.dots {
    position: absolute;
    top: 0;
    right: 0;
    width: 20px;
    height: 18px;
    background-color: #c8c8cc;
    color: #555;
    font-size: 12px;
    line-height: 18px;
    text-align: center;
}
.drop {
    position: absolute;
    top: -1px;
    right: -1px;
    display: flex;
    align-items: center;
    justify-content: center;
    width: 20px;
    height: 20px;
    background-color: #d8d9dc;
}
.seg {
    display: flex;
    flex: 1;
    border: 1px solid #ddd;
    background-color: #fff;
    line-height: 20px;
    text-align: center;
}
.seg b {
    flex: 1;
    background-color: #419ff8;
    color: #fff;
    font-weight: normal;
}
.seg span {
    flex: 1;
}
.s3 {
    border-right: 0;
}
.chk {
    display: flex;
    flex: none;
    align-items: center;
    gap: 4px;
    height: 13px;
    margin: 1px 0 1px 5px;
}
.spin-row {
    gap: 5px;
}
.spin-row label {
    width: 67px;
}
.spin {
    position: relative;
    width: 70px;
    padding-left: 3px;
    border: 1px solid #ddd;
    background-color: #fff;
    font-family: "Liberation Sans", sans-serif;
    font-size: 13px;
    line-height: 18px;
}
.arrows {
    position: absolute;
    top: -1px;
    right: -1px;
    display: flex;
    align-items: center;
    justify-content: center;
    width: 14px;
    height: 20px;
    background-color: #d8d9dc;
}
.caps {
    display: flex;
    flex: none;
    gap: 5px;
    height: 15px;
    margin-top: -5px;
    padding-left: 77px;
    line-height: 15px;
}
.caps span {
    width: 70px;
    text-align: center;
}

/* dialog */
.dialog {
    position: absolute;
    top: 220px;
    left: 633px;
    display: flex;
    flex-direction: column;
    width: 654px;
    height: 597px;
    border: 1px solid #555;
    background-color: #f4f5f8;
    box-shadow: 0 0 30px rgba(0, 0, 0, 0.35);
}
.dlg-title {
    display: flex;
    align-items: center;
    justify-content: space-between;
    height: 31px;
    padding: 0 13px 2px 2px;
    background-color: #fff;
    font-size: 15px;
}
.dlg-body {
    padding: 2px 3px 0 2px;
}
.drow {
    display: flex;
    height: 20px;
    line-height: 20px;
}
.drow label {
    flex: none;
    width: 73px;
}
.drow.first label {
    width: 69px;
}
.r2 {
    gap: 4px;
    margin-top: 10px;
}
.r2 label {
    margin-right: -4px;
}
.r3 {
    height: 22px;
    margin-top: 6px;
}
.r4 {
    margin-top: 4px;
}
.dsel {
    position: relative;
    display: flex;
    flex: 1;
    align-items: center;
    padding-left: 4px;
    border: 1px solid #ddd;
    background-color: #fff;
}
.dsel.bare {
    padding-left: 0;
}
.dsel.with-db {
    padding-left: 1px;
}
.db {
    margin-right: 5px;
}
.dpreview {
    display: flex;
    flex: none;
    align-items: center;
    justify-content: center;
    width: 24px;
    border: 1px solid #ddd;
    background-color: #fff;
}
.dseg {
    display: flex;
    flex: 1;
    padding: 1px;
    border: 1px solid #ddd;
    background-color: #fff;
    line-height: 18px;
    text-align: center;
}
.dseg b {
    flex: 1;
    background-color: #419ff8;
    color: #fff;
    font-weight: normal;
}
.dseg span {
    flex: 1;
}
.dlg-foot {
    display: flex;
    gap: 10px;
    justify-content: flex-end;
    margin-top: auto;
    padding: 0 13px 4px 0;
}
.dlg-foot button {
    width: 44px;
    height: 20px;
    padding: 0;
    border: 1px solid #ddd;
    background-color: #fff;
    font-family: "Noto Sans CJK SC", sans-serif;
    font-size: 12px;
}

/* hand-drawn red annotations on top of everything */
.mark {
    position: absolute;
    border: 4px solid #ff2419;
    border-radius: 4px;
}
.mark-dialog {
    top: 222px;
    left: 667px;
    width: 635px;
    height: 206px;
}
.mark-dict {
    top: 522px;
    left: 1717px;
    width: 201px;
    height: 79px;
}
.mark-dots {
    top: 538px;
    left: 1874px;
    width: 38px;
    height: 39px;
}
```

FILE: grid.js
```js
const sheet = document.getElementById('sheetGrid');
const letters = 'ABCDEFGHIJKLMNO';
const heads = ['产品类别', '产品名称', '销售数量'];
const expr = '类别名称, 产品名称, 销售数量, a/类别名称';

function addCell(cls, text) {
    const div = document.createElement('div');
    div.className = 'cell ' + cls;
    div.textContent = text || '';
    sheet.appendChild(div);
}

addCell('corner');
letters.split('').forEach((l, c) => addCell(c === 0 ? 'col-head hit' : 'col-head', l));

for (let r = 1; r <= 31; r++) {
    addCell(r === 1 ? 'row-head hit' : 'row-head', String(r));
    for (let c = 0; c < letters.length; c++) {
        if (r === 1 && c < 3) {
            addCell(c === 0 ? 'navy picked-cell' : 'navy', heads[c]);
        } else if (r === 2 && c < 3) {
            addCell('expr', expr);
        } else {
            addCell('');
        }
    }
}
```
